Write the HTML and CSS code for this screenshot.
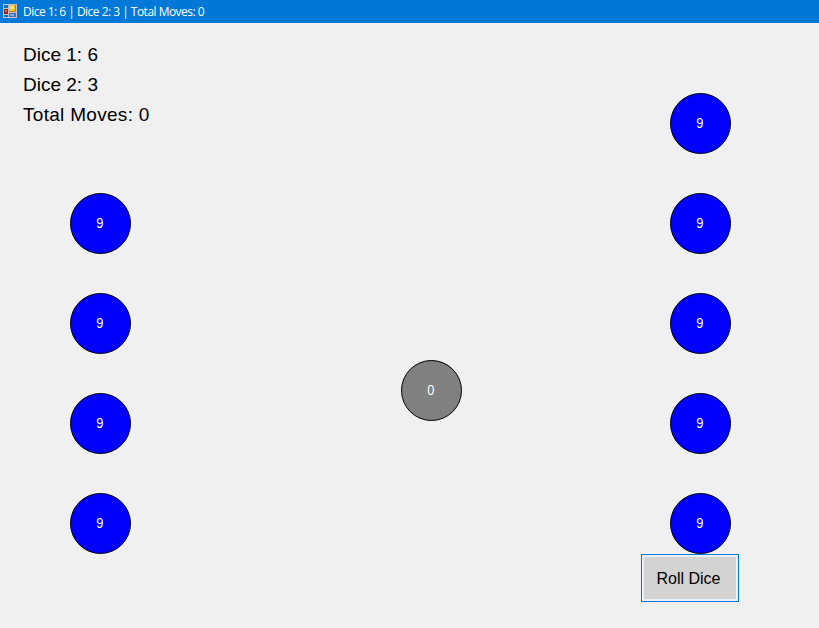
FILE: index.html
```html
<!DOCTYPE html>
<html lang="en">
<head>
<meta charset="utf-8">
<title>Dice 1: 6 | Dice 2: 3 | Total Moves: 0</title>
<link rel="stylesheet" href="styles.css">
</head>
<body>
<header class="titlebar">
  <svg class="app-icon" width="14" height="14" viewBox="0 0 14 14" shape-rendering="crispEdges">
    <path fill="#c4c4c4" d="M0 0h14v14H0z"/>
    <path fill="#0d72c4" d="M1 1h4v3H1zM1 11h4v2H1z"/>
    <path fill="#a51f16" d="M1 5h4v5H1z"/>
    <path fill="#e65a45" d="M2 6h2v2H2z"/>
    <path fill="#b8810d" d="M6 1h7v7H6z"/>
    <path fill="#f4c231" d="M6 1h6v6H6z"/>
    <path fill="#ffe27d" d="M7 2h4v3H7z"/>
    <path fill="#3f70c9" d="M6 9h7v4H6z"/>
    <path fill="#83aaf0" d="M7 10h4v2H7z"/>
  </svg>
  <span class="caption">Dice 1: 6 | Dice 2: 3 | Total Moves: 0</span>
</header>
<main class="board">
  <section class="left">
    <div class="score">
      <div>Dice 1: 6</div>
      <div>Dice 2: 3</div>
      <div class="moves">Total Moves: 0</div>
    </div>
    <div class="stack">
      <div class="token"><span>9</span></div>
      <div class="token"><span>9</span></div>
      <div class="token"><span>9</span></div>
      <div class="token"><span>9</span></div>
    </div>
  </section>
  <section class="center">
    <div class="token neutral"><span>0</span></div>
  </section>
  <section class="right">
    <div class="stack">
      <div class="token"><span>9</span></div>
      <div class="token"><span>9</span></div>
      <div class="token"><span>9</span></div>
      <div class="token"><span>9</span></div>
      <div class="token"><span>9</span></div>
    </div>
    <button class="roll"><span>Roll Dice</span></button>
  </section>
</main>
</body>
</html>
```
FILE: styles.css
```css
* { box-sizing: border-box; }
body {
  margin: 0;
  width: 819px;
  height: 628px;
  overflow: hidden;
  background: #f0f0f0;
  color: #000;
  font-family: "Liberation Sans", Arial, sans-serif;
}
.titlebar {
  display: flex;
  align-items: center;
  gap: 6px;
  height: 23px;
  padding-left: 3px;
  background: #0078d7;
  color: #fff;
}
.app-icon { flex: none; margin-top: -1px; }
.caption {
  padding-top: 1px;
  font: 12px/22px "Open Sans", "Noto Sans", sans-serif;
  letter-spacing: -0.52px;
  white-space: nowrap;
}
.board {
  display: grid;
  grid-template-columns: 401px 240px 1fr;
  height: 605px;
}
.score {
  height: 170px;
  padding: 17px 0 0 23px;
  font-size: 19px;
  line-height: 30px;
}
.moves { letter-spacing: 0.3px; }
.stack {
  display: flex;
  flex-direction: column;
  gap: 39px;
}
.left .stack { padding-left: 70px; }
.center { padding-top: 337px; }
.right { padding-top: 70px; }
.right .stack { padding-left: 29px; }
.token {
  display: flex;
  align-items: center;
  justify-content: center;
  flex: none;
  width: 61px;
  height: 61px;
  padding-right: 2px;
  border: 1px solid #000;
  border-radius: 50%;
  background: #00f;
  color: #fff;
  font: 14px/15px "Liberation Sans", Arial, sans-serif;
}
.token span { transform: scaleX(0.92); }
.neutral { background: #808080; }
.roll {
  display: block;
  width: 98px;
  height: 48px;
  padding: 2px 3px 0 0;
  border: 1px solid #0078d7;
  box-shadow: inset 0 0 0 2px #e5f1fb;
  background: #d3d3d3;
  color: #000;
  font: 16px/20px "Liberation Sans", Arial, sans-serif;
}
```
